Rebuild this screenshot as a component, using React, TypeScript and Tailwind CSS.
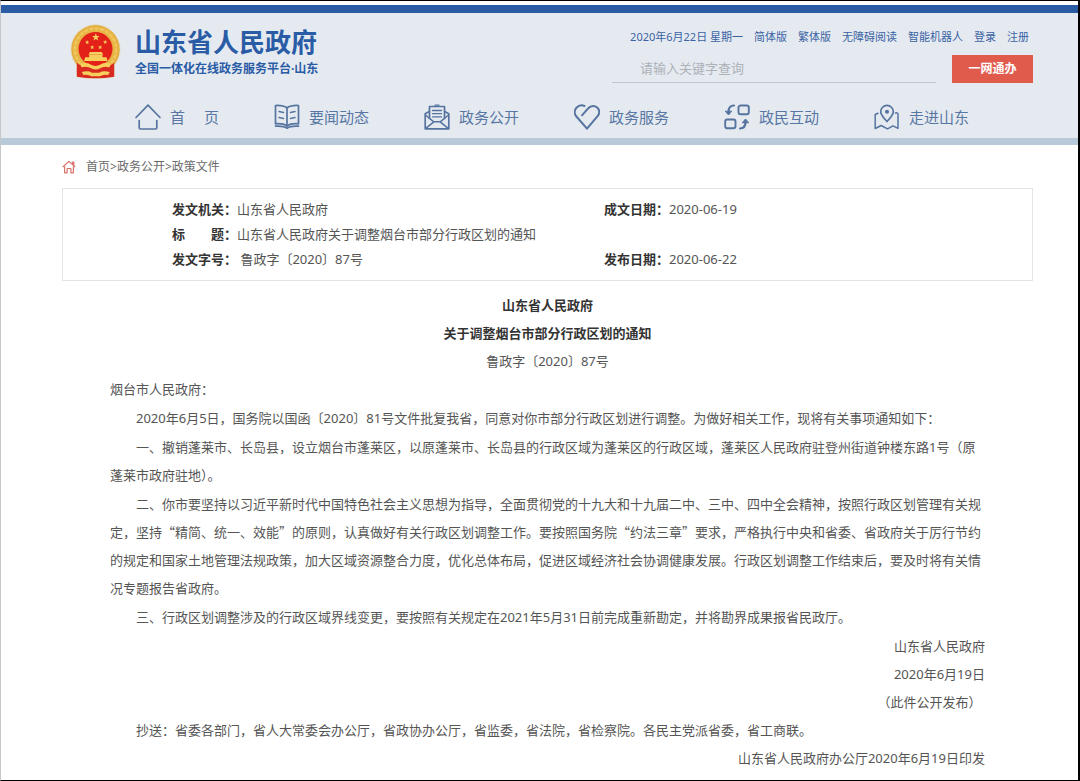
import React from "react";

const navItems = [
  { label: "首　\u00a0页", icon: <HomeIcon /> },
  { label: "要闻动态", icon: <BookIcon /> },
  { label: "政务公开", icon: <MailIcon /> },
  { label: "政务服务", icon: <HeartIcon /> },
  { label: "政民互动", icon: <ExchangeIcon /> },
  { label: "走进山东", icon: <MapIcon /> },
];

const topLinks = ["简体版", "繁体版", "无障碍阅读", "智能机器人", "登录", "注册"];

function NavSvg({ children }: { children: React.ReactNode }) {
  return (
    <svg
      viewBox="0 0 26 26"
      className="size-[26px] shrink-0"
      fill="none"
      stroke="#56749f"
      strokeWidth="1.7"
      strokeLinecap="round"
      strokeLinejoin="round"
      aria-hidden="true"
    >
      {children}
    </svg>
  );
}

function HomeIcon() {
  return (
    <NavSvg>
      <path d="M1 13.5 13 1.2l12 12.3" />
      <path d="M4.2 16.5v7.2q0 1.3 1.3 1.3h15q1.3 0 1.3-1.3v-7.2" />
    </NavSvg>
  );
}

function BookIcon() {
  return (
    <NavSvg>
      <path d="M13 3.800C10.500 2 6 1.300 1.500 1.500V19.800c4.500-.3 9 .2 11.500 2.200 2.500-2 7-2.500 11.500-2.200V1.500C20 1.300 15.500 2 13 3.800Z" />
      <path d="M13 4v17.500M1.500 22.200c4.500-.3 9 .2 11.500 2 2.500-1.800 7-2.300 11.500-2" />
      <path d="M5 7.600l4.500.9M5 13.600l4.500.9M21 7.600l-4.500.9M21 13.600l-4.500.9" strokeWidth="1.500" />
    </NavSvg>
  );
}

function MailIcon() {
  return (
    <NavSvg>
      <path d="M5.500 14.500V2.500h15v12" />
      <path d="M8.500 6.500h9M8.500 9.700h9M8.500 12.900h9M11 1.200h4" strokeWidth="1.300" />
      <path d="M5.300 7.500 1.200 9.800v15h23.600v-15l-4.100-2.300" />
      <path d="m1.500 11 8.300 6.800h6.400L24.500 11M1.800 24.300l8-6.500M24.200 24.300l-8-6.500" strokeWidth="1.500" />
    </NavSvg>
  );
}

function HeartIcon() {
  return (
    <NavSvg>
      <path
        d="M8 11.300l5.700-6.400c2.600-3.600 7.600-4 10.100-.8 2 2.600 1.700 5.900-.4 8.300L13 24.700 2.400 12.500C.2 9.900.3 6.300 2.500 3.700 4.700 1.300 8 1 10.500 2"
        strokeWidth="2"
      />
    </NavSvg>
  );
}

function ExchangeIcon() {
  return (
    <NavSvg>
      <rect x="14.500" y="1.500" width="10.300" height="8.800" rx="2" strokeWidth="1.900" />
      <rect x="1.200" y="15.500" width="10.300" height="8.800" rx="2" strokeWidth="1.900" />
      <path d="M10 1.500C6.500 1.500 4.500 4 4.500 8" strokeWidth="2.200" />
      <path d="m1.500 7.500 3 3.500 3-3.500Z" fill="#56749f" strokeWidth="1" />
      <path d="M16 24.500c3.500 0 5.500-2.500 5.500-6.500" strokeWidth="2.200" />
      <path d="m18.500 18.500 3-3.500 3 3.500Z" fill="#56749f" strokeWidth="1" />
    </NavSvg>
  );
}

function MapIcon() {
  return (
    <NavSvg>
      <path d="M13 17.500C9.500 13.500 6.700 11 6.700 7.700a6.300 6.300 0 0 1 12.600 0c0 3.300-2.800 5.800-6.300 9.800Z" />
      <circle cx="13" cy="7.800" r="1.200" fill="#56749f" />
      <path d="M4 9.200 1.200 10.500v14l6-3 6.300 3.300 5.500-3 5 2.500V10.500c0-1.200-1-2-2.500-1.500" strokeWidth="1.500" />
    </NavSvg>
  );
}

const star = "0,-10 2.400,-3.200 9.500,-3.100 3.800,1.200 5.900,8.100 0,4 -5.900,8.100 -3.800,1.200 -9.500,-3.100 -2.400,-3.200";

function Emblem() {
  return (
    <svg viewBox="31 22 152 165" className="h-[55px] w-[51px] shrink-0" aria-hidden="true">
      <path
        d="M107 24a74 74 0 0 0-57 121l1 35q56 12 112 0l1-35a74 74 0 0 0-57-121Z"
        fill="#fbf3d2"
        stroke="#d9cfb0"
        strokeWidth="2"
      />
      <circle cx="107" cy="98" r="72" fill="#e8b445" />
      <circle cx="107" cy="98" r="62" fill="none" stroke="#f0c75c" strokeWidth="7" strokeDasharray="12 4" />
      <circle cx="107" cy="98" r="71" fill="none" stroke="#d6a33c" strokeWidth="2" />
      <path d="M51 138q12 11 24 6l32 10 32-10q12 5 24-6v42q-56 10-112 0Z" fill="#d92a22" />
      <circle cx="107" cy="97" r="51" fill="#e32119" />
      <g fill="#f6cf5c">
        <polygon points={star} transform="translate(108 62) scale(1.200)" />
        <polygon points={star} transform="translate(82 77) scale(.7)" />
        <polygon points={star} transform="translate(97 92) scale(.7)" />
        <polygon points={star} transform="translate(121 92) scale(.7)" />
        <polygon points={star} transform="translate(136 76) scale(.7)" />
        <path d="M90 106h36l4 8H86ZM88 115h40v7h12l3 11H73l3-11h12Z" />
        <path d="M61 142q20-8 34 3 12 6 24 0 14-11 34-3l-4 10q-18-5-28 3-13 7-27 0-11-8-29-3Z" />
        <path d="M66 166q20-5 30 2h22q12-7 32-2l-5 9q-16-3-24 4H95q-10-7-24-4Z" />
      </g>
    </svg>
  );
}

function Header() {
  return (
    <header className="border-t-8 border-b-[7px] border-t-[#2a5ca6] border-b-[#b8cad9] bg-[#e5eaf1] pr-[45px] pl-[69px]">
      <div className="flex h-[83px] items-start justify-between">
        <a href="#" className="flex gap-[14px] pt-[11px] text-[#2a5ca6]">
          <Emblem />
          <div className="pt-[2px] font-bold">
            <h1 className="text-[26px] leading-8">山东省人民政府</h1>
            <p className="mt-px text-[12px] leading-5">全国一体化在线政务服务平台·山东</p>
          </div>
        </a>

        <div className="pt-[14px]">
          <div className="flex justify-end gap-[11px] pr-1 text-[11px] leading-5 text-[#3a63a3]">
            <span>2020年6月22日 星期一</span>
            {topLinks.map((text) => (
              <a key={text} href="#">
                {text}
              </a>
            ))}
          </div>
          <form className="mt-2 flex gap-4">
            <input
              type="text"
              aria-label="请输入关键字查询"
              placeholder="请输入关键字查询"
              className="w-[324px] border-b border-[#bcc7d6] bg-transparent pl-7 text-[13px] outline-none placeholder:text-[#adb1b8]"
            />
            <button type="button" className="h-7 w-[81px] bg-[#e15b4d] text-[12px] font-bold text-white">
              一网通办
            </button>
          </form>
        </div>
      </div>

      <nav className="pr-[64px] pl-[65px]">
        <ul className="flex h-[42px] items-center justify-between">
          {navItems.map((item) => (
            <li key={item.label}>
              <a href="#" className="flex items-center gap-[9px] text-[15px] leading-6 text-[#5877a3]">
                {item.icon}
                {item.label}
              </a>
            </li>
          ))}
        </ul>
      </nav>
    </header>
  );
}

function Breadcrumb() {
  return (
    <nav className="flex h-[43px] items-center gap-[10px] text-[12px] text-[#6b6b6b]">
      <svg
        viewBox="0 0 14 14"
        className="size-[14px]"
        fill="none"
        stroke="#d9736c"
        strokeWidth="1.200"
        strokeLinejoin="round"
        aria-hidden="true"
      >
        <path d="M.8 7 7 1.400 13.200 7M10.500 4V2h1.300v3.500M2.600 6.500v6.300h2.500V8.500h3.800v4.300h2.500V6.500" />
      </svg>
      <p>
        <a href="#">首页</a>&gt;<a href="#">政务公开</a>&gt;<a href="#">政策文件</a>
      </p>
    </nav>
  );
}

function InfoTable() {
  return (
    <div className="border border-[#e4e4e4] py-2 pl-[109px]">
      <table className="w-full table-fixed text-left text-[13px] leading-[25px]">
        <colgroup>
          <col className="w-[65px]" />
          <col className="w-[367px]" />
          <col className="w-[65px]" />
          <col />
        </colgroup>
        <tbody>
          <tr>
            <th className="font-bold text-[#333]">发文机关：</th>
            <td>山东省人民政府</td>
            <th className="font-bold text-[#333]">成文日期：</th>
            <td>2020-06-19</td>
          </tr>
          <tr>
            <th className="font-bold text-[#333]">标　　题：</th>
            <td colSpan={3}>山东省人民政府关于调整烟台市部分行政区划的通知</td>
          </tr>
          <tr>
            <th className="font-bold text-[#333]">发文字号：</th>
            <td>&nbsp;鲁政字〔2020〕87号</td>
            <th className="font-bold text-[#333]">发布日期：</th>
            <td>2020-06-22</td>
          </tr>
        </tbody>
      </table>
    </div>
  );
}

function Notice() {
  return (
    <article className="pt-[10px] text-[13px] leading-7">
      <div className="text-center">
        <h2 className="font-bold text-[#333]">
          山东省人民政府
          <br />
          关于调整烟台市部分行政区划的通知
        </h2>
        <p>鲁政字〔2020〕87号</p>
      </div>

      <div className="space-y-px px-12">
        <p>烟台市人民政府：</p>
        <p className="indent-[2em]">
          2020年6月5日，国务院以国函〔2020〕81号文件批复我省，同意对你市部分行政区划进行调整。为做好相关工作，现将有关事项通知如下：
        </p>
        <p className="indent-[2em]">
          一、撤销蓬莱市、长岛县，设立烟台市蓬莱区，以原蓬莱市、长岛县的行政区域为蓬莱区的行政区域，蓬莱区人民政府驻登州街道钟楼东路1号（原蓬莱市政府驻地）。
        </p>
        {/* the Chinese font goes first here for full-width quotes */}
        <p className="indent-[2em] font-['Noto_Sans_CJK_SC',sans-serif]">
          二、你市要坚持以习近平新时代中国特色社会主义思想为指导，全面贯彻党的十九大和十九届二中、三中、四中全会精神，按照行政区划管理有关规定，坚持“精简、统一、效能”的原则，认真做好有关行政区划调整工作。要按照国务院“约法三章”要求，严格执行中央和省委、省政府关于厉行节约的规定和国家土地管理法规政策，加大区域资源整合力度，优化总体布局，促进区域经济社会协调健康发展。行政区划调整工作结束后，要及时将有关情况专题报告省政府。
        </p>
        <p className="indent-[2em]">
          三、行政区划调整涉及的行政区域界线变更，要按照有关规定在2021年5月31日前完成重新勘定，并将勘界成果报省民政厅。
        </p>
      </div>

      <div className="px-12 pt-px text-right">
        <p>山东省人民政府</p>
        <p>2020年6月19日</p>
        <p>（此件公开发布）&nbsp;</p>
        <p className="indent-[2em] text-left">
          抄送：省委各部门，省人大常委会办公厅，省政协办公厅，省监委，省法院，省检察院。各民主党派省委，省工商联。
        </p>
        <p>山东省人民政府办公厅2020年6月19日印发</p>
      </div>
    </article>
  );
}

export default function App() {
  return (
    <div
      lang="zh-CN"
      className="min-h-screen border-t border-r-2 border-b border-l border-black border-l-[#c4c6ca] bg-white pt-1 font-['Noto_Sans','Noto_Sans_CJK_SC',sans-serif] text-[#555]"
    >
      <Header />
      <main className="pr-[45px] pl-[61px]">
        <Breadcrumb />
        <InfoTable />
        <Notice />
      </main>
    </div>
  );
}
